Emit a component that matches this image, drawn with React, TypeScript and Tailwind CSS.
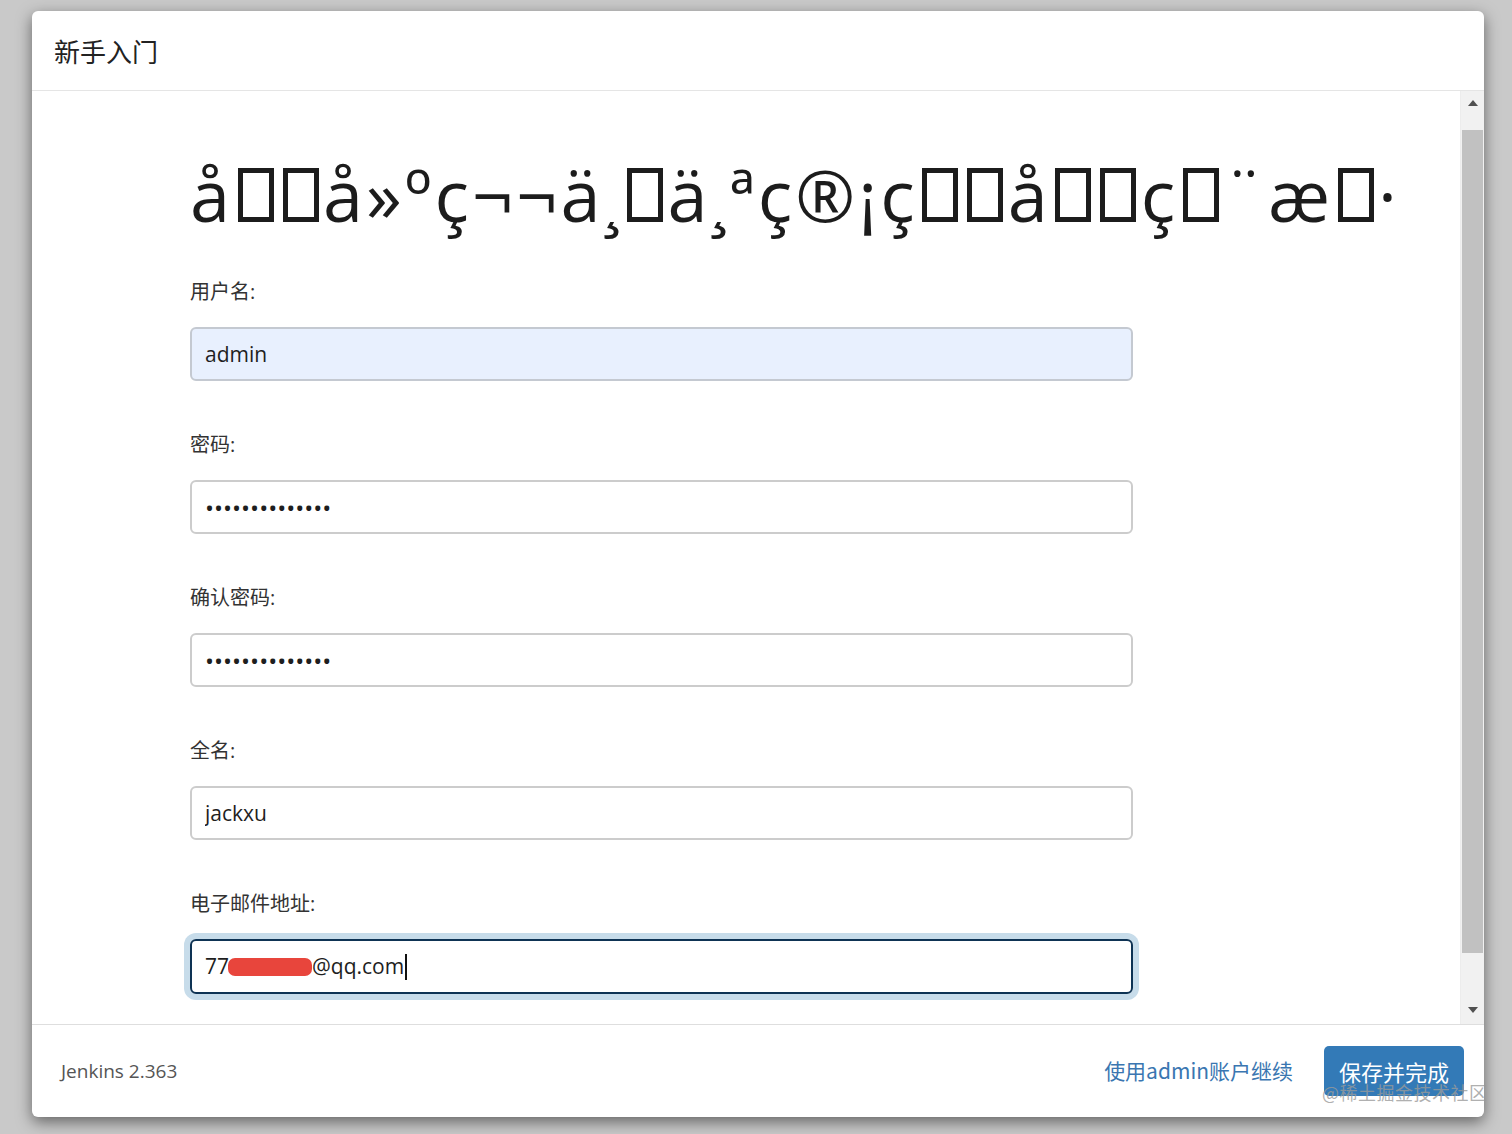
import React from 'react';

const Tofu: React.FC = () => (
  <span className="inline-block w-[36px] h-[54px] border-[5px] border-[#1c1c1c] mx-[4.5px]" />
);

const inputBase =
  "block w-[943px] h-[54px] rounded-[6px] border-2 px-[13px] text-[21px] text-[#1e1e1e] outline-none";

const App: React.FC = () => {
  const font = { fontFamily: '"Open Sans", "Noto Sans CJK SC", sans-serif' };

  return (
    <div className="relative w-[1512px] h-[1134px] bg-[#c9c9c9] pt-[11px] pl-[32px]" style={font}>
      <div className="flex flex-col w-[1452px] h-[1106px] bg-white rounded-[6px] shadow-[0_5px_15px_rgba(0,0,0,0.5)] overflow-hidden">
        {/* header */}
        <div className="flex items-center h-[80px] pl-[22px] border-b border-[#e5e5e5]">
          <h4 className="text-[26px] text-[#222] font-['Noto_Sans_CJK_SC',sans-serif]">新手入门</h4>
        </div>

        {/* body */}
        <div className="flex h-[934px] border-b border-[#dedede]">
          <div className="flex-1 overflow-hidden pl-[158px]">
            <h1 className="mt-[58px] text-[72px] leading-[90px] tracking-[3px] text-[#1c1c1c] whitespace-nowrap">
              å<Tofu /><Tofu />å»ºç¬¬ä¸<Tofu />ä¸ªç®¡ç<Tofu /><Tofu />å<Tofu /><Tofu />ç<Tofu />¨æ<Tofu />·
            </h1>

            <form className="mt-[39px]">
              <label className="block text-[20px] leading-[28px] text-[#333] mb-[21px]">用户名:</label>
              <input
                type="text"
                readOnly
                defaultValue="admin"
                className={`${inputBase} bg-[#e8f0fe] border-[#c4c9d1]`}
              />

              <label className="block mt-[50px] text-[20px] leading-[28px] text-[#333] mb-[21px]">密码:</label>
              <input
                type="password"
                readOnly
                defaultValue="jenkins-admin1"
                className={`${inputBase} !text-[24px] bg-white border-[#cccccc]`}
              />

              <label className="block mt-[50px] text-[20px] leading-[28px] text-[#333] mb-[21px]">确认密码:</label>
              <input
                type="password"
                readOnly
                defaultValue="jenkins-admin1"
                className={`${inputBase} !text-[24px] bg-white border-[#cccccc]`}
              />

              <label className="block mt-[50px] text-[20px] leading-[28px] text-[#333] mb-[21px]">全名:</label>
              <input
                type="text"
                readOnly
                defaultValue="jackxu"
                className={`${inputBase} bg-white border-[#cccccc]`}
              />

              <label className="block mt-[50px] text-[20px] leading-[28px] text-[#333] mb-[21px]">电子邮件地址:</label>
              <div className="flex items-center w-[943px] h-[55px] rounded-[6px] border-2 border-[#0e3354] px-[13px] text-[21px] text-[#1e1e1e] shadow-[0_0_0_6px_#c7dcea]">
                <span>77</span>
                <span className="inline-block w-[84px] h-[18px] rounded-[7px] bg-[#e8453c] -ml-[1px]" />
                <span>@qq.com</span>
                <span className="inline-block w-[1.5px] h-[26px] bg-[#111] ml-[1px]" />
              </div>
            </form>
          </div>

          {/* scrollbar */}
          <div className="flex flex-col items-center w-[24px] bg-[#f1f1f1] border-l border-[#ececec]">
            <div className="flex items-center justify-center h-[24px] w-full">
              <svg width="10" height="6" viewBox="0 0 10 6"><path d="M5 0L10 6H0z" fill="#505050" /></svg>
            </div>
            <div className="mt-[15px] w-[21px] h-[823px] bg-[#c1c1c1]" />
            <div className="flex-1" />
            <div className="flex items-center justify-center h-[28px] w-full">
              <svg width="10" height="6" viewBox="0 0 10 6"><path d="M0 0H10L5 6z" fill="#505050" /></svg>
            </div>
          </div>
        </div>

        {/* footer */}
        <div className="flex flex-1 items-center pl-[29px] pr-[20px]">
          <span className="text-[19px] text-[#555]">Jenkins 2.363</span>
          <div className="flex-1" />
          <a className="text-[21px] text-[#3a76b1] font-['Noto_Sans_CJK_SC',sans-serif] cursor-pointer">使用admin账户继续</a>
          <button
            type="button"
            className="ml-[31px] w-[140px] h-[50px] rounded-[5px] bg-[#337ab7] text-white text-[22px] font-['Noto_Sans_CJK_SC',sans-serif]"
          >
            保存并完成
          </button>
        </div>
      </div>

      <span className="absolute left-[1322px] top-[1079px] text-[18px] text-[#9a9a9a]/80 font-['Noto_Sans_CJK_SC',sans-serif] tracking-[0.5px]">
        @稀土掘金技术社区
      </span>
    </div>
  );
};

export default App;
